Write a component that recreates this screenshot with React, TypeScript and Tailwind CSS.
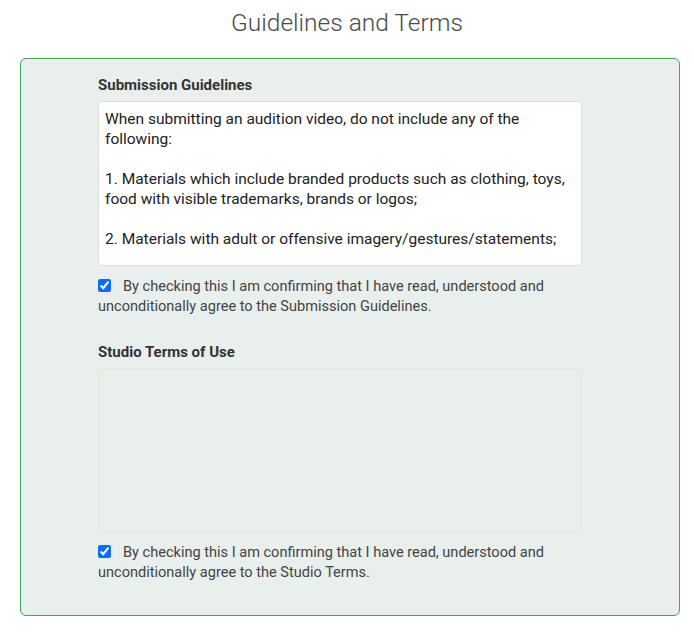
import { useState } from 'react';

const font = { fontFamily: 'Roboto, "Noto Sans", sans-serif' };

interface AgreeProps {
  line1: string;
  line2: string;
}

const AgreeCheck = ({ line1, line2 }: AgreeProps) => {
  const [checked, setChecked] = useState(true);
  return (
    <label className="mt-[11px] block text-[14.55px] leading-[20px] text-[#444]">
      <input
        type="checkbox"
        checked={checked}
        onChange={(e) => setChecked(e.target.checked)}
        className="mr-[12px] ml-0 h-[13px] w-[13px] align-[-1px] accent-[#0b6cff]"
      />
      {line1}
      <br />
      {line2}
    </label>
  );
};

export default function App() {
  return (
    <div className="min-h-[639px] bg-white text-[#333]" style={font}>
      {/* Header */}
      <h1 className="pt-[7px] text-center text-[24.5px] leading-[32px] font-light text-[#4a4a4a]">
        Guidelines and Terms
      </h1>

      {/* Panel */}
      <div className="mt-[19px] ml-[20px] w-[660px] rounded-[6px] border border-[#3aa757] bg-[#e9efed] pt-[16px] pb-[32px] pl-[77px]">
        <div className="w-[484px]">
          <div className="mb-[6px] text-[15px] leading-[20px] font-bold text-[#333]">
            Submission Guidelines
          </div>
          <div className="h-[165px] overflow-hidden rounded-[3px] border border-[#dcdcdc] bg-white px-[6px] pt-[7px] text-[15.5px] leading-[20px] text-[#222]">
            <p>
              When submitting an audition video, do not include any of the
              <br />
              following:
            </p>
            <p className="mt-[20px]">
              1. Materials which include branded products such as clothing, toys,
              <br />
              food with visible trademarks, brands or logos;
            </p>
            <p className="mt-[20px]">2. Materials with adult or offensive imagery/gestures/statements;</p>
          </div>
          <AgreeCheck
            line1="By checking this I am confirming that I have read, understood and"
            line2="unconditionally agree to the Submission Guidelines."
          />

          <div className="mt-[25px] mb-[6px] text-[15px] leading-[20px] font-bold text-[#333]">
            Studio Terms of Use
          </div>
          <div className="h-[164px] border border-[#efe3d6]" />
          <AgreeCheck
            line1="By checking this I am confirming that I have read, understood and"
            line2="unconditionally agree to the Studio Terms."
          />
        </div>
      </div>
    </div>
  );
}
